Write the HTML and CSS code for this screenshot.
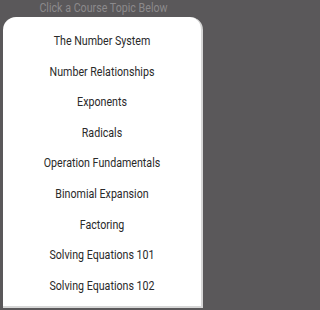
FILE: index.html
```html
<!DOCTYPE html>
<html>
<head>
<meta charset="utf-8">
<link rel="stylesheet" href="styles.css">
</head>
<body>
<div class="screen">
  <div class="header">Click a Course Topic Below</div>
  <div class="card">
    <ul class="topics">
      <li>The Number System</li>
      <li>Number Relationships</li>
      <li>Exponents</li>
      <li>Radicals</li>
      <li>Operation Fundamentals</li>
      <li>Binomial Expansion</li>
      <li>Factoring</li>
      <li>Solving Equations 101</li>
      <li>Solving Equations 102</li>
    </ul>
  </div>
</div>
</body>
</html>
```
FILE: styles.css
```css
html, body {
  margin: 0;
  padding: 0;
  height: 100%;
  overflow: hidden;
  background: #5a585a;
}
body {
  font-family: Roboto, "Liberation Sans", sans-serif;
}
.screen {
  width: 207px;
  height: 310px;
  overflow: hidden;
  background: #5a585a;
}
.header {
  height: 17px;
  line-height: 17px;
  text-align: center;
  color: #8c8a8c;
  font-size: 12px;
  transform: scaleX(0.89);
}
.card {
  margin: 0 4px 0 3px;
  height: 291px;
  background: #fff;
  border-right: 2px solid #d6d6d6;
  border-bottom: 2px solid #d6d6d6;
  border-radius: 13px 13px 0 0;
  box-sizing: border-box;
  padding-top: 9px;
}
.topics {
  list-style: none;
  margin: 0;
  padding: 0;
}
.topics li {
  height: 30.6px;
  line-height: 30.6px;
  text-align: center;
  font-size: 13px;
  color: #2a2a2a;
  transform: scaleX(0.82);
}
```
